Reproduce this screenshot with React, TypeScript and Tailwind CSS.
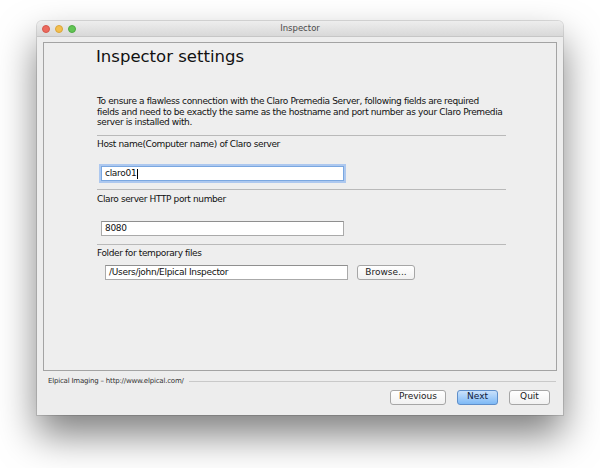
import React from "react";

const font = { fontFamily: '"DejaVu Sans", "Liberation Sans", sans-serif' };

function Separator() {
  return <div className="h-px bg-[#b9b9b9] w-[409px]" />;
}

function Field({ value, focused, className = "" }: { value: string; focused?: boolean; className?: string }) {
  return (
    <div
      className={`h-[15px] w-[243px] bg-white border flex items-center pl-[3px] text-[9px] tracking-[-0.3px] text-[#111] ${
        focused
          ? "border-[#7aa7e0] shadow-[0_0_0_2px_rgba(120,170,240,0.55)]"
          : "border-[#aaaaaa] border-t-[#8f8f8f]"
      } ${className}`}
    >
      {value}
      {focused && <span className="inline-block w-px h-[10px] bg-black ml-px" />}
    </div>
  );
}

function Button({ label, primary, className = "" }: { label: string; primary?: boolean; className?: string }) {
  return (
    <div
      className={`h-[15px] flex items-center justify-center rounded-[3px] border text-[9px] ${
        primary
          ? "border-[#5f8fca] bg-gradient-to-b from-[#c9e1fb] to-[#7db9f6] text-[#10203a]"
          : "border-[#a6a6a6] bg-gradient-to-b from-white to-[#f1f1f1] text-[#222]"
      } ${className}`}
    >
      {label}
    </div>
  );
}

export default function App() {
  return (
    <div className="w-[600px] h-[468px] bg-white overflow-hidden" style={font}>
      <div className="pt-[21px] pl-[37px]">
        <div className="w-[526px] h-[394px] bg-[#ededed] rounded-t-[5px] shadow-[0_20px_38px_rgba(0,0,0,0.5),0_0_0_1px_rgba(0,0,0,0.12)] flex flex-col">
          {/* title bar */}
          <div className="h-[16px] rounded-t-[5px] bg-gradient-to-b from-[#eeeeee] to-[#d8d8d8] border-b border-[#c6c6c6] relative flex items-center">
            <div className="flex gap-[5px] pl-[5px]">
              <span className="w-[8px] h-[8px] rounded-full bg-[#ec6a5e] border border-[#d5574b]" />
              <span className="w-[8px] h-[8px] rounded-full bg-[#f4bf4f] border border-[#d9a53a]" />
              <span className="w-[8px] h-[8px] rounded-full bg-[#61c554] border border-[#4fa943]" />
            </div>
            <div className="absolute inset-0 flex items-center justify-center text-[8.5px] text-[#4b4b4b]">Inspector</div>
          </div>

          {/* inner panel */}
          <div className="mt-[5px] mx-[6px] h-[329px] border border-[#a3a3a3] bg-[#eeeeee] pl-[52px] pt-[4px]">
            <div className="text-[16.5px] text-[#111] leading-[20px]">Inspector settings</div>

            <div className="mt-[29px] text-[9px] tracking-[-0.38px] leading-[10.7px] text-[#111] pl-px">
              To ensure a flawless connection with the Claro Premedia Server, following fields are required
              <br />
              fields and need to be exactly the same as the hostname and port number as your Claro Premedia
              <br />
              server is installed with.
            </div>

            <div className="mt-[7px] pl-px">
              <Separator />
              <div className="text-[9px] tracking-[-0.38px] leading-[10px] mt-[3px] text-[#111]">Host name(Computer name) of Claro server</div>
              <Field value="claro01" focused className="mt-[17px] ml-[4px]" />
              <div className="mt-[8px]">
                <Separator />
              </div>
              <div className="text-[9px] tracking-[-0.38px] leading-[10px] mt-[4px] text-[#111]">Claro server HTTP port number</div>
              <Field value="8080" className="mt-[17px] ml-[4px]" />
              <div className="mt-[8px]">
                <Separator />
              </div>
              <div className="text-[9px] tracking-[-0.38px] leading-[10px] mt-[3px] text-[#111]">Folder for temporary files</div>
              <div className="flex items-start mt-[7px] ml-[8px]">
                <Field value="/Users/john/Elpical Inspector" className="w-[242px]" />
                <Button label="Browse..." className="ml-[9px] w-[58px] h-[14px]" />
              </div>
            </div>
          </div>

          {/* footer */}
          <div className="flex items-center mt-[5px] pl-[11px] pr-[7px]">
            <span className="text-[7px] tracking-[-0.2px] text-[#333] whitespace-nowrap">Elpical Imaging – http://www.elpical.com/</span>
            <div className="flex-1 h-px bg-[#c9c9c9] ml-[5px]" />
          </div>
          <div className="flex justify-end gap-[11px] pr-[13px] mt-[3px]">
            <Button label="Previous" className="w-[56px]" />
            <Button label="Next" primary className="w-[41px]" />
            <Button label="Quit" className="w-[41px]" />
          </div>
        </div>
      </div>
    </div>
  );
}
